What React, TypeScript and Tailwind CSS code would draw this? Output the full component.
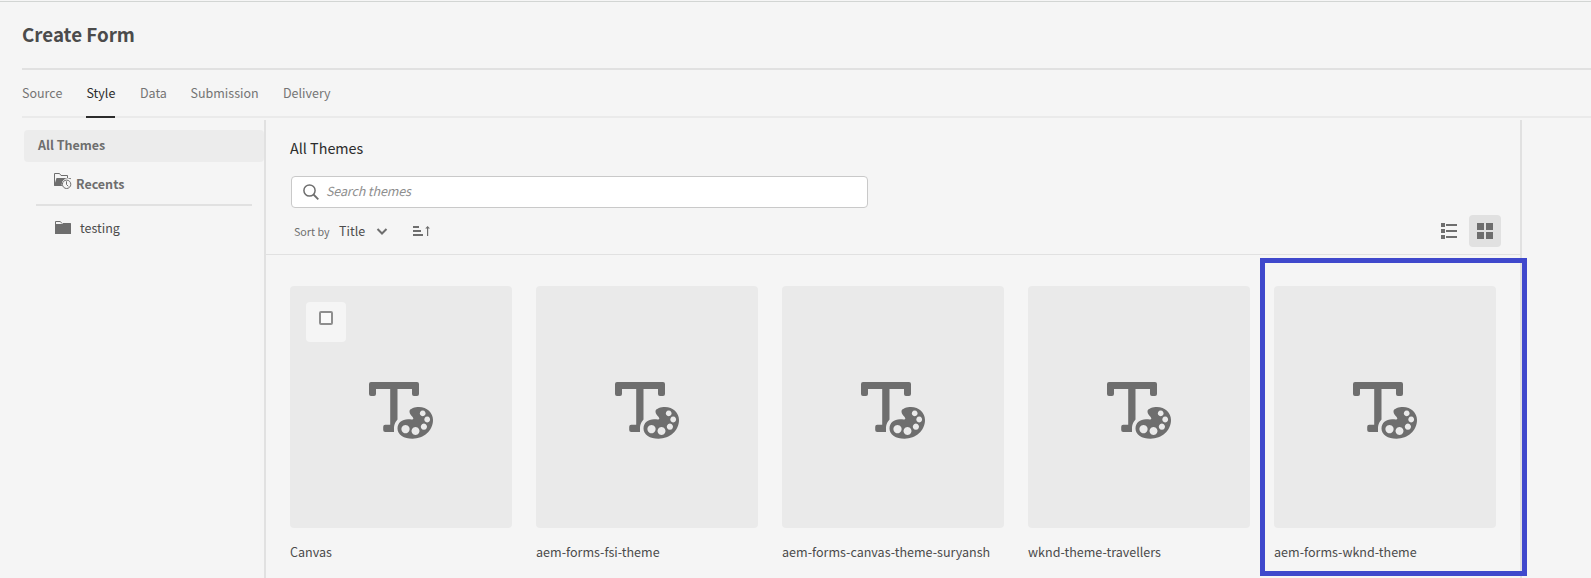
const font = "font-['Noto_Sans_CJK_SC','Noto_Sans',sans-serif]";

const tabs = [
  { label: "Source", cls: "mr-[24px] w-[40px] text-[#747474]" },
  { label: "Style", cls: "mr-[25px] w-[29px] border-b-2 border-[#2c2c2c] pl-[0.5px] text-[#2c2c2c]" },
  { label: "Data", cls: "mr-[24px] w-[26.5px] text-[#747474]" },
  { label: "Submission", cls: "mr-[24px] w-[68.5px] text-[#747474]" },
  { label: "Delivery", cls: "w-[48px] text-[#747474]" },
];

const themes = [
  { name: "Canvas", checkbox: true },
  { name: "aem-forms-fsi-theme" },
  { name: "aem-forms-canvas-theme-suryansh" },
  { name: "wknd-theme-travellers" },
  { name: "aem-forms-wknd-theme", highlighted: true },
];

function ThemeIcon() {
  return (
    <svg className="mt-[96px] ml-[79px] h-[58px] w-[66px]" viewBox="0 0 66 58">
      <path
        fill="#6e6e6e"
        d="M2 0H48Q50 0 50 2V12Q50 14 48 14H45Q43 14 43 12V7H28.500V37.500Q25 41.500 25 46V50H16.200Q14.200 50 14.200 48V44.800Q14.200 42.800 16.200 42.800H21.200V7H7V12Q7 14 5 14H2Q0 14 0 12V2Q0 0 2 0Z"
      />
      <path
        fill="#6e6e6e"
        fillRule="evenodd"
        d="M40.500 29C41 26.500 46 25 50 25C58 25 64 30.700 64 38C64 48.500 55 56.700 43.500 56.700C35 56.700 28.500 53 28.500 46.500C28.500 41 33 37.300 39 37.300C42 37.300 44.300 38 44.300 36.500C44.300 34.500 40.200 32.800 40.500 29ZM53.700 28.500a2.900 2.900 0 1 0 .01 0ZM58.200 34.600a2.900 2.900 0 1 0 .01 0ZM54.900 41.600a3.100 3.100 0 1 0 .01 0ZM46.500 45a4 4 0 1 0 .01 0ZM36.500 43a4.100 4.100 0 1 0 .01 0Z"
      />
    </svg>
  );
}

function RecentIcon() {
  return (
    <svg className="h-[17px] w-[18px] shrink-0" viewBox="0 0 18 17">
      <path d="M.5 12.500V.500H5.500L7 2.500H13.500V5" fill="none" stroke="#6e6e6e" />
      <path d="M0 13L2.500 5H17L16.500 6.200A5.500 5.500 0 0 0 8.500 13Z" fill="#6e6e6e" />
      <circle cx="12.600" cy="11.300" r="4.900" fill="#f5f5f5" />
      <circle cx="12.600" cy="11.300" r="4.200" fill="none" stroke="#6e6e6e" />
      <path d="M12.500 8.300V11.500L14.300 13.300" fill="none" stroke="#6e6e6e" />
    </svg>
  );
}

function FolderIcon() {
  return (
    <svg className="h-[13px] w-[16px] shrink-0" viewBox="0 0 16 13">
      <path d="M.5 3V.500H5.300L7 2.500" fill="none" stroke="#6e6e6e" />
      <path d="M0 3H7.500L8 2H15.500L16 2.500V13H0Z" fill="#6e6e6e" />
    </svg>
  );
}

export default function App() {
  return (
    <div className={`flex h-[578px] w-[1591px] flex-col overflow-hidden bg-[#f5f5f5] pt-px ${font}`}>
      <header className="h-[69px] shrink-0 border-t border-[#d2d5d3] pl-[22px]">
        <div className="h-[68px] border-b-2 border-[#e1e1e1] pt-[17px]">
          <h1 className="text-[18.75px] leading-[30px] font-bold whitespace-nowrap text-[#4b4b4b]">Create Form</h1>
        </div>
      </header>
      <nav className="ml-[22px] flex h-[48px] shrink-0 border-b-2 border-[#eaeaea]">
        {tabs.map((t) => (
          <span key={t.label} className={`h-[48px] pt-[13px] text-[12.5px] leading-[20px] whitespace-nowrap ${t.cls}`}>
            {t.label}
          </span>
        ))}
      </nav>
      <div className="mt-[2px] flex h-[458px]">
        <aside className="w-[264px] shrink-0 pt-[10px] pl-[24px]">
          <div className="h-[32px] rounded-[4px] bg-[#ececec] pl-[14px] text-[12.5px] leading-[30px] font-bold text-[#6e6e6e]">
            All Themes
          </div>
          <div className="ml-[12px] flex h-[44px] w-[216px] gap-[4px] border-b-2 border-[#e1e1e1] pt-[11px] pl-[18px]">
            <RecentIcon />
            <span className="mt-[1px] text-[12.5px] leading-[20px] font-bold text-[#6e6e6e]">Recents</span>
          </div>
          <div className="mt-[12px] flex gap-[9px] pl-[31px]">
            <div className="pt-[3px]">
              <FolderIcon />
            </div>
            <span className="text-[12.5px] leading-[20px] text-[#4b4b4b]">testing</span>
          </div>
        </aside>
        <main className="w-[1258px] shrink-0 border-x-2 border-[#e1e1e1]">
          <section className="h-[135px] border-b border-[#e1e1e1] pl-[24px]">
            <h2 className="pt-[18px] text-[14.35px] leading-[20px] text-[#2c2c2c]">All Themes</h2>
            <div className="mt-[18px] ml-px flex h-[32px] w-[577px] items-center rounded-[4px] border border-[#c9c9c9] bg-white pl-[11px]">
              <svg className="-mt-px h-[16px] w-[16px]" viewBox="0 0 16 16" fill="none" stroke="#6e6e6e">
                <circle cx="6.500" cy="6.500" r="5.600" strokeWidth="1.500" />
                <path d="M10.500 10.500L15.300 15.300" strokeWidth="1.800" />
              </svg>
              <span className="-mt-[2px] ml-[7px] text-[12.5px] leading-[20px] tracking-[-0.12px] text-[#8e8e8e] italic">
                Search themes
              </span>
            </div>
            <div className="mt-[7px] flex h-[32px] items-center pl-[4px]">
              <span className="mt-[2px] w-[45px] text-[10.7px] leading-[20px] text-[#6e6e6e]">Sort by</span>
              <span className="w-[37px] text-[12.5px] leading-[20px] text-[#4b4b4b]">Title</span>
              <svg className="h-[7px] w-[12px]" viewBox="0 0 12 7" fill="none" stroke="#6e6e6e" strokeWidth="2">
                <path d="M1.500 1L6 5.500L10.500 1" />
              </svg>
              <svg className="ml-[25px] h-[11px] w-[17px]" viewBox="0 0 17 11" fill="#6e6e6e">
                <path d="M0 0H6V2H0ZM0 4H8V6H0ZM0 8H10V10H0ZM14 2.500V10H15.200V2.500H17L14.600 0L12.200 2.500Z" />
              </svg>
              <svg className="ml-auto h-[16px] w-[16px]" viewBox="0 0 16 16" fill="#6e6e6e">
                <path d="M0 0H4V4H0ZM0 6H4V10H0ZM0 12H4V16H0ZM5 1H16V3H5ZM5 7H16V9H5ZM5 13H16V15H5Z" />
              </svg>
              <div className="mr-[19px] ml-[12px] flex h-[32px] w-[32px] items-center justify-center rounded-[4px] bg-[#e1e1e1]">
                <svg className="h-[16px] w-[16px]" viewBox="0 0 16 16" fill="#6e6e6e">
                  <path d="M0 0H7V7H0ZM9 0H16V7H9ZM0 9H7V16H0ZM9 9H16V16H9Z" />
                </svg>
              </div>
            </div>
          </section>
          <section className="flex gap-[24px] pt-[31px] pl-[24px]">
            {themes.map((t) => (
              <article key={t.name} className="relative w-[222px] shrink-0">
                <div className="relative h-[242px] overflow-hidden rounded-[4px] bg-[#eaeaea]">
                  {t.checkbox && (
                    <div className="absolute top-[16px] left-[16px] flex h-[40px] w-[40px] justify-center rounded-[4px] bg-[#f5f5f5] pt-[9px]">
                      <span className="h-[14px] w-[14px] rounded-[2px] border-2 border-[#8e8e8e] bg-[#fafafa]" />
                    </div>
                  )}
                  <ThemeIcon />
                </div>
                <p className="mt-[14px] text-[12.55px] leading-[20px] whitespace-nowrap text-[#4b4b4b]">{t.name}</p>
                {t.highlighted && (
                  <div className="absolute -top-[28px] -left-[14px] h-[318px] w-[267px] border-5 border-[#3f48cc]" />
                )}
              </article>
            ))}
          </section>
        </main>
      </div>
    </div>
  );
}
